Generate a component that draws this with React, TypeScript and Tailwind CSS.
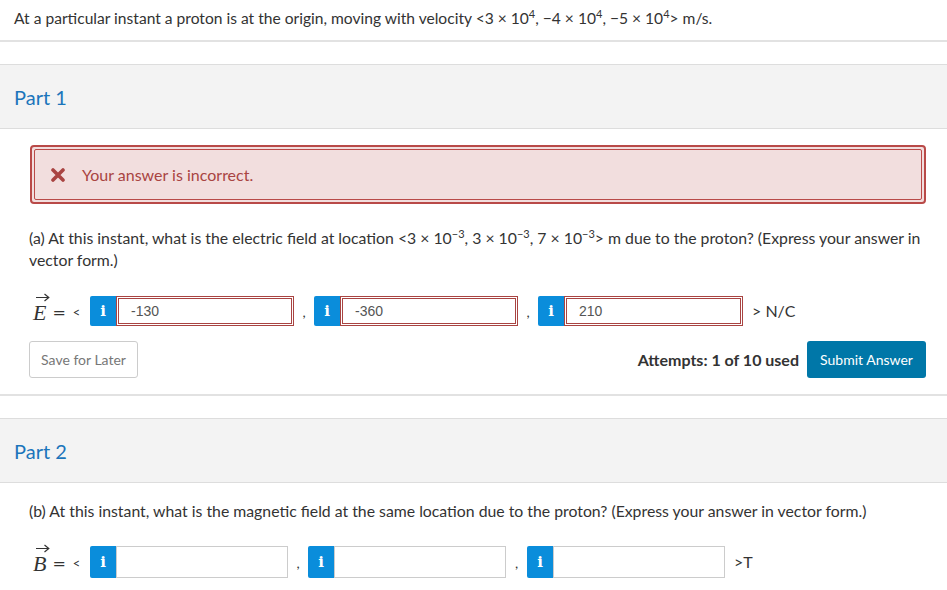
import type { ReactNode } from "react";

const font = { fontFamily: "Lato, 'Open Sans', sans-serif" };

function Sup({ children }: { children: ReactNode }) {
  return <sup className="-top-[6px] text-[11px]">{children}</sup>;
}

function InfoBtn() {
  return (
    <div className="flex h-full w-[26px] shrink-0 items-center justify-center rounded-l-[2px] bg-[#0a8ddb] text-[15px] font-bold text-white" style={{ fontFamily: "'DejaVu Serif', serif" }}>
      i
    </div>
  );
}

function WrongInput({ value, w }: { value: string; w: number }) {
  return (
    <div className="h-full border border-[#a94442] p-[1px]" style={{ width: w }}>
      <div className="flex h-full items-center border border-[#a94442] pl-[12px] text-[14px] text-[#555]" style={{ fontFamily: "'Liberation Sans', Arial, sans-serif" }}>
        {value}
      </div>
    </div>
  );
}

function EmptyInput({ w }: { w: number }) {
  return <div className="h-full border border-[#ccc] bg-white" style={{ width: w }} />;
}

function VecSym({ letter }: { letter: string }) {
  return (
    <span className="relative inline-block text-[22px] leading-[22px] italic text-[#333]" style={{ fontFamily: "'Liberation Serif', serif" }}>
      <svg className="absolute -top-[9px] left-[3px]" width="14" height="9" viewBox="0 0 14 9">
        <path d="M0 4.5 H12.5 M8.5 1 L12.8 4.5 L8.5 8" stroke="#333" strokeWidth="1.2" fill="none" />
      </svg>
      {letter}
    </span>
  );
}

function PartHeader({ label }: { label: string }) {
  return (
    <div className="flex h-[65px] items-center border-y border-[#ddd] bg-[#f3f3f3] pl-[14px] text-[20px] text-[#1b75bb]">
      {label}
    </div>
  );
}

function VecLead({ letter }: { letter: string }) {
  return (
    <div className="ml-[4px] flex w-[57px] items-center pt-[4px]">
      <VecSym letter={letter} />
      <span className="ml-[6px] text-[16px]" style={{ fontFamily: "'DejaVu Sans', sans-serif" }}>=</span>
      <span className="ml-[7px] text-[13px]">&lt;</span>
    </div>
  );
}

export default function App() {
  return (
    <div className="min-h-[590px] bg-white text-[#333]" style={font}>
      <div className="h-[42px] border-b-2 border-[#e2e2e2] pl-[14px] pt-[7px] text-[15.6px] leading-[22px]">
        At a particular instant a proton is at the origin, moving with velocity &lt;3 × 10<Sup>4</Sup>, −4 × 10<Sup>4</Sup>, −5 × 10<Sup>4</Sup>&gt; m/s.
      </div>

      <div className="mt-[22px]">
        <PartHeader label="Part 1" />
        <div className="border-b-2 border-[#e2e2e2] pb-[16px] pl-[29px] pr-[21px] pt-[16px]">
          <div className="ml-[1px] h-[59px] rounded-[4px] border-2 border-[#b94a48] bg-[#f2dede] p-[2px]">
            <div className="flex h-full items-center rounded-[2px] border border-[#b94a48] pl-[16px] text-[16px] text-[#a94442]">
              <svg width="14" height="14" viewBox="0 0 14 14" className="mr-[17px]">
                <path d="M2 2 L12 12 M12 2 L2 12" stroke="#a94442" strokeWidth="3.6" strokeLinecap="round" />
              </svg>
              Your answer is incorrect.
            </div>
          </div>

          <p className="mt-[23px] text-[15.8px] leading-[22px]">
            (a) At this instant, what is the electric field at location &lt;3 × 10<Sup>−3</Sup>, 3 × 10<Sup>−3</Sup>, 7 × 10<Sup>−3</Sup>&gt; m due to the proton? (Express your answer in vector form.)
          </p>

          <div className="mt-[25px] flex h-[30px] items-center">
            <VecLead letter="E" />
            <InfoBtn />
            <WrongInput value="-130" w={178} />
            <span className="w-[20px] text-center text-[14px]">,</span>
            <InfoBtn />
            <WrongInput value="-360" w={178} />
            <span className="w-[20px] text-center text-[14px]">,</span>
            <InfoBtn />
            <WrongInput value="210" w={179} />
            <span className="ml-[9px] text-[16px]">&gt; N/C</span>
          </div>

          <div className="mt-[15px] flex items-center">
            <button className="h-[37px] w-[109px] rounded-[3px] border border-[#ccc] bg-white text-[14px] text-[#777]">
              Save for Later
            </button>
            <div className="ml-auto mr-[8px] text-[16px] font-bold">Attempts: 1 of 10 used</div>
            <button className="h-[37px] w-[119px] rounded-[3px] bg-[#0077a8] text-[14px] text-white">
              Submit Answer
            </button>
          </div>
        </div>
      </div>

      <div className="mt-[22px]">
        <PartHeader label="Part 2" />
        <div className="pl-[29px] pr-[21px] pt-[17px]">
          <p className="text-[15.8px] leading-[22px]">
            (b) At this instant, what is the magnetic field at the same location due to the proton? (Express your answer in vector form.)
          </p>
          <div className="mt-[24px] flex h-[32px] items-center">
            <VecLead letter="B" />
            <InfoBtn />
            <EmptyInput w={172} />
            <span className="w-[20px] text-center text-[14px]">,</span>
            <InfoBtn />
            <EmptyInput w={172} />
            <span className="w-[21px] text-center text-[14px]">,</span>
            <InfoBtn />
            <EmptyInput w={172} />
            <span className="ml-[9px] text-[16px]">&gt;T</span>
          </div>
        </div>
      </div>
    </div>
  );
}
